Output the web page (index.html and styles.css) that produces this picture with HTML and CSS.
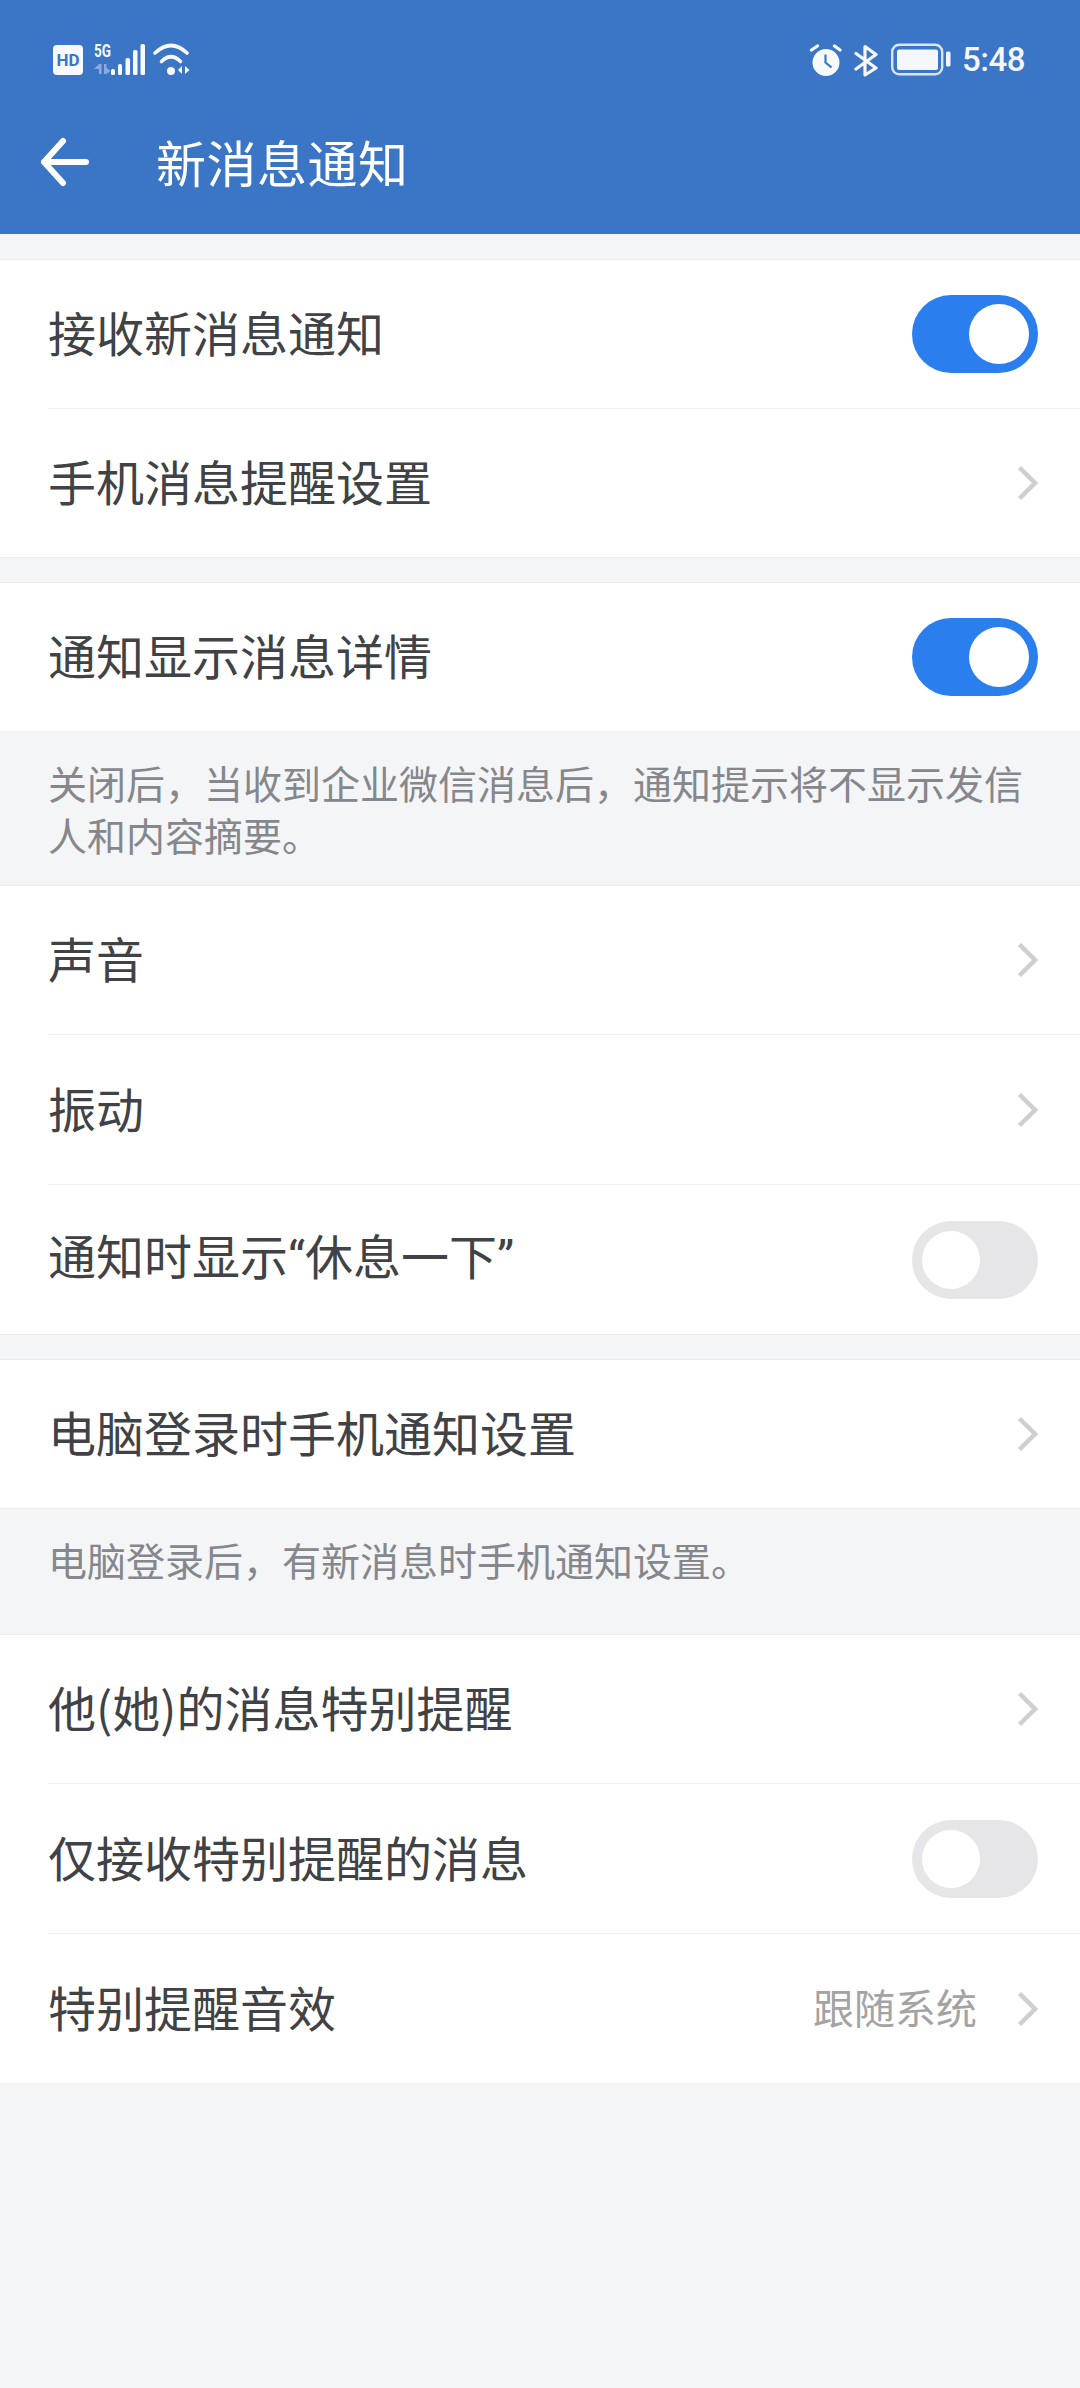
FILE: index.html
```html
<!DOCTYPE html>
<html lang="zh-CN">
<head>
<meta charset="utf-8">
<title>新消息通知</title>
<link rel="stylesheet" href="styles.css">
</head>
<body>
<header class="header">
  <div class="status">
    <div class="hd-box"><span class="hd">HD</span></div>
    <svg class="status-left" width="98" height="41" viewBox="94 36 98 41">
      <text x="94" y="57" class="net" textLength="17" lengthAdjust="spacingAndGlyphs">5G</text>
      <g fill="#8fa9e0">
        <path d="M99 64h2.500v10h-2.500zM94 69l5-5v5z"/>
        <path d="M104 64h2.500v10h-2.500zM106.500 74v-6l4 3z"/>
      </g>
      <g fill="#f7f9fe">
        <rect x="111" y="69" width="4" height="6" rx="1.500"/>
        <rect x="118" y="64" width="4" height="11" rx="1.500"/>
        <rect x="125.500" y="58" width="4.500" height="17" rx="1.500"/>
        <rect x="133" y="50" width="4.500" height="25" rx="1.500"/>
        <rect x="140.500" y="44" width="4.500" height="31" rx="1.500"/>
      </g>
      <g fill="none" stroke="#f7f9fe" stroke-width="3.600" stroke-linecap="round">
        <path d="M155 53Q171 38 187 53"/>
        <path d="M161.500 61.500Q171 52 180.500 61.500"/>
      </g>
      <circle cx="171" cy="71" r="4" fill="#f7f9fe"/>
      <path d="M182 66v8l-4-4zM185 66l4.500 4-4.500 4z" fill="#f7f9fe"/>
    </svg>
    <div class="status-right">
      <svg width="33" height="34" viewBox="810 43 33 34" class="alarm">
        <circle cx="827" cy="62.500" r="13.500" fill="#f7f9fe"/>
        <path d="M826.500 54.500v8l6 5" fill="none" stroke="#3a75c6" stroke-width="2.200"/>
        <path d="M812.500 50l6-4M841 50l-5.500-4" stroke="#f7f9fe" stroke-width="3.200" stroke-linecap="round"/>
      </svg>
      <svg width="24" height="34" viewBox="855 43 24 34" class="bt">
        <path d="M857 53.500l20 14.500-11 7V46.500l11 8-20 14.500" fill="none" stroke="#f7f9fe" stroke-width="3.200" stroke-linecap="round" stroke-linejoin="round"/>
      </svg>
      <svg width="60" height="34" viewBox="892 43 60 34" class="batt">
        <rect x="893.200" y="44.800" width="50" height="29.500" rx="7" fill="none" stroke="#dbe5f6" stroke-width="2.400"/>
        <rect x="898" y="49.500" width="41" height="20.500" rx="2" fill="#f4f7fd"/>
        <rect x="947" y="51.500" width="4.500" height="15" rx="1.500" fill="#f4f7fd"/>
      </svg>
      <span class="time">5:48</span>
    </div>
  </div>
  <div class="titlebar">
    <svg class="back" width="50" height="50" viewBox="0 0 50 50"><path d="M46 25H4M23 4L4 25l19 21" fill="none" stroke="#fff" stroke-width="6" stroke-linecap="round" stroke-linejoin="round"/></svg>
    <h1 class="title">新消息通知</h1>
  </div>
</header>

<main>
  <section class="group first">
    <div class="row"><span class="label">接收新消息通知</span><span class="switch on"></span></div>
    <div class="row"><span class="label">手机消息提醒设置</span><svg class="chev" viewBox="0 0 21 36"><path d="M2.500 2.500L18 18 2.500 33.500" fill="none" stroke="#cfcfcf" stroke-width="4.500"/></svg></div>
  </section>

  <section class="group">
    <div class="row"><span class="label">通知显示消息详情</span><span class="switch on"></span></div>
  </section>
  <p class="note note-a">关闭后&#xFF0C;当收到企业微信消息后&#xFF0C;通知提示将不显示发信人和内容摘要。</p>

  <section class="group flush">
    <div class="row"><span class="label">声音</span><svg class="chev" viewBox="0 0 21 36"><path d="M2.500 2.500L18 18 2.500 33.500" fill="none" stroke="#cfcfcf" stroke-width="4.500"/></svg></div>
    <div class="row"><span class="label">振动</span><svg class="chev" viewBox="0 0 21 36"><path d="M2.500 2.500L18 18 2.500 33.500" fill="none" stroke="#cfcfcf" stroke-width="4.500"/></svg></div>
    <div class="row"><span class="label">通知时显示<span class="q">“</span>休息一下<span class="q">”</span></span><span class="switch"></span></div>
  </section>

  <section class="group">
    <div class="row"><span class="label">电脑登录时手机通知设置</span><svg class="chev" viewBox="0 0 21 36"><path d="M2.500 2.500L18 18 2.500 33.500" fill="none" stroke="#cfcfcf" stroke-width="4.500"/></svg></div>
  </section>
  <p class="note note-b">电脑登录后&#xFF0C;有新消息时手机通知设置。</p>

  <section class="group flush">
    <div class="row"><span class="label">他(她)的消息特别提醒</span><svg class="chev" viewBox="0 0 21 36"><path d="M2.500 2.500L18 18 2.500 33.500" fill="none" stroke="#cfcfcf" stroke-width="4.500"/></svg></div>
    <div class="row"><span class="label">仅接收特别提醒的消息</span><span class="switch"></span></div>
    <div class="row"><span class="label">特别提醒音效</span><span class="value">跟随系统</span><svg class="chev" viewBox="0 0 21 36"><path d="M2.500 2.500L18 18 2.500 33.500" fill="none" stroke="#cfcfcf" stroke-width="4.500"/></svg></div>
  </section>
</main>
</body>
</html>
```
FILE: styles.css
```css
* { box-sizing: border-box; }
html, body { margin: 0; padding: 0; }
body {
  width: 1080px;
  height: 2388px;
  overflow: hidden;
  background: #f4f5f7;
  font-family: "Noto Sans CJK SC", "Noto Sans", Roboto, sans-serif;
}
.header { height: 234px; background: #3a75c6; color: #fff; }
.status {
  height: 120px;
  padding: 43px 55px 0 53px;
  display: flex;
  align-items: flex-start;
}
.hd-box {
  flex: none;
  width: 30px;
  height: 30px;
  margin-top: 2px;
  border-radius: 4px;
  background: #f7f9fe;
  display: flex;
  align-items: center;
  justify-content: center;
}
.hd { font: 700 17px/30px Roboto, sans-serif; color: #3a75c6; }
.status-left { flex: none; margin: -7px 0 0 11px; }
.net { font: 700 18px Roboto, sans-serif; fill: #f7f9fe; }
.status-right { display: flex; align-items: flex-start; margin-left: auto; }
.bt { margin-left: 12px; }
.batt { margin-left: 13px; }
.time { margin-left: 11px; font: 500 33px/34px Roboto, sans-serif; letter-spacing: -0.500px; color: #f4f7fd; }
.titlebar { display: flex; align-items: center; height: 80px; padding-left: 40px; }
.back { flex: none; margin-top: 4px; }
.title { margin: 2px 0 0 66px; font-size: 50px; font-weight: 400; line-height: 70px; letter-spacing: 0.500px; }

.group {
  margin-top: 24px;
  background: #fff;
  border-top: 1px solid #ececee;
  border-bottom: 1px solid #ececee;
}
.group.first { margin-top: 25px; }
.group.flush { margin-top: 0; border-top: 0; }
.row {
  height: 148px;
  padding: 0 42px 0 48px;
  display: flex;
  align-items: center;
  justify-content: space-between;
}
.row + .row { height: 149px; border-top: 1px solid #f0f0f2; margin-left: 48px; padding-left: 0; }
.flush .row + .row { height: 150px; }
.label { flex: 1; font-size: 48px; line-height: 66px; padding-bottom: 6px; color: #404246; }
.q { font-family: Roboto, sans-serif; }
.value { font-size: 41px; line-height: 60px; padding-bottom: 5px; color: #a3a3a3; margin-right: 40px; }
.chev { width: 21px; height: 36px; flex: none; }
.switch {
  flex: none;
  width: 126px;
  height: 78px;
  border-radius: 39px;
  background: #e6e6e8;
  position: relative;
}
.switch::after {
  content: "";
  position: absolute;
  top: 10px;
  left: 10px;
  width: 58px;
  height: 58px;
  border-radius: 50%;
  background: #fff;
}
.switch.on { background: #2a7eee; }
.switch.on::after { left: 57px; top: 9px; width: 60px; height: 60px; }
.note { margin: 0; padding: 24px 48px 0; color: #85878c; font-size: 39px; line-height: 52px; border-bottom: 1px solid #ececee; }
.note-a { height: 154px; }
.note-b { height: 126px; }
```
